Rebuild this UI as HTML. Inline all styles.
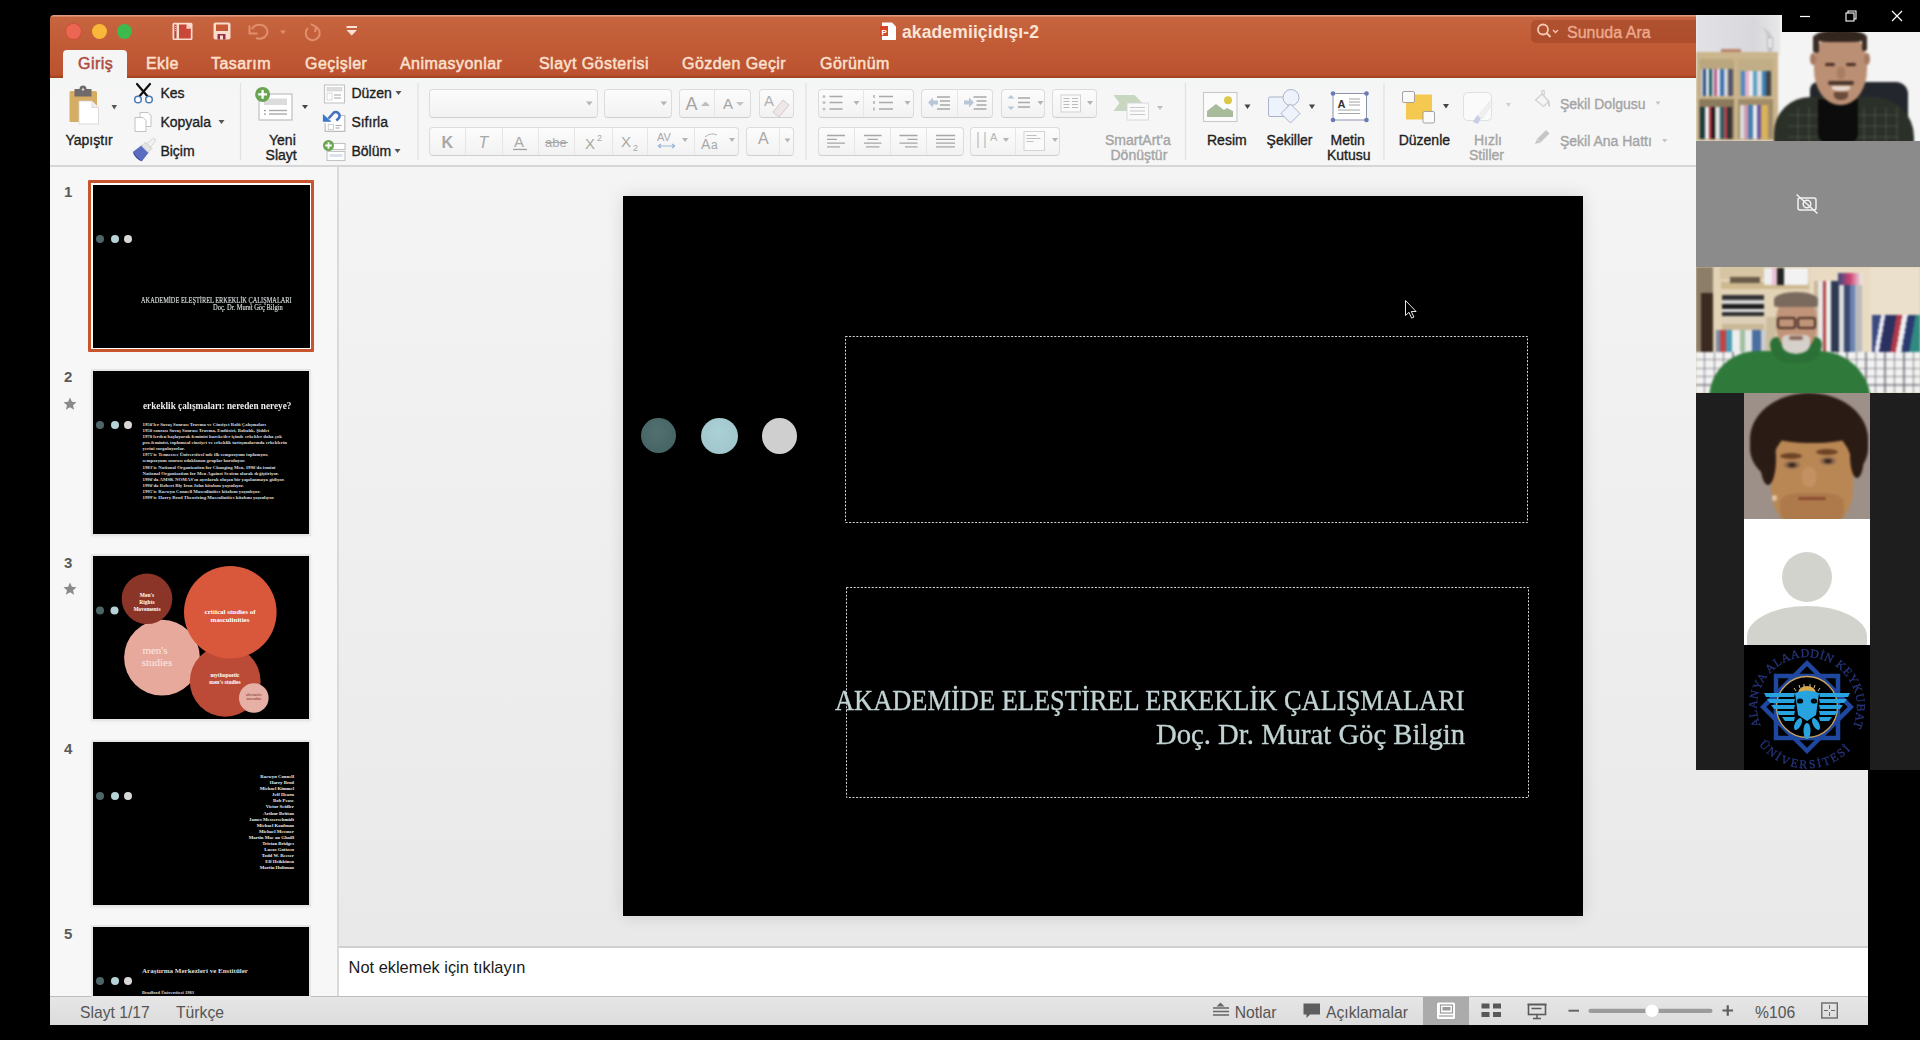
<!DOCTYPE html>
<html><head><meta charset="utf-8">
<style>
*{margin:0;padding:0;box-sizing:border-box}
html,body{width:1920px;height:1040px;overflow:hidden;background:#000;font-family:"Liberation Sans",sans-serif;position:relative}
.a{position:absolute}
.t{position:absolute;white-space:nowrap;line-height:1}
.tab{position:absolute;top:56px;font-size:16px;color:#fbe0cf;line-height:1;white-space:nowrap;letter-spacing:0.45px;-webkit-text-stroke:0.5px #fbe0cf}
.rl{position:absolute;font-size:14px;color:#1e1e1e;white-space:nowrap;line-height:1;-webkit-text-stroke:0.35px #1e1e1e}
.dis{color:#a4a4a4;-webkit-text-stroke:0.35px #a4a4a4}
.btn{position:absolute;border:1px solid #dcdcdc;border-bottom-color:#cfcfcf;border-radius:4px;background:linear-gradient(#fcfcfc,#f2f2f2)}
.st{position:absolute;font-size:15.7px;color:#555;white-space:nowrap;line-height:1}
.num{position:absolute;left:64px;font-size:15px;font-weight:bold;color:#5a5a5a;line-height:1}
.thumb{position:absolute;left:93px;width:216px;height:163px;background:#000;box-shadow:0 0 0 2px #e6e6e6,0 1px 3px 2px rgba(0,0,0,0.05)}
.dot{position:absolute;border-radius:50%}
.sl{font-family:"Liberation Serif",serif}
svg{position:absolute;overflow:visible}
</style></head><body>
<!-- window backgrounds -->
<div class="a" style="left:50px;top:15px;width:1646px;height:63px;background:linear-gradient(#e3a283 0,#dd9474 1px,#c5653f 2.5px,#c15b36 50%,#bc5230 95%,#a5461f 98%,#9a411f 100%);border-radius:4px 0 0 0"></div>
<div class="a" style="left:50px;top:78px;width:1646px;height:89px;background:linear-gradient(#f4f5f6,#f6f6f6 20%,#f6f6f6);border-bottom:2px solid #d6d6d6"></div>
<div class="a" style="left:50px;top:167px;width:289px;height:829px;background:#f7f7f7;border-right:2px solid #dadada"></div>
<div class="a" style="left:339px;top:167px;width:1529px;height:780px;background:linear-gradient(#f4f4f4,#e9e9e9)"></div>
<div class="a" style="left:339px;top:946px;width:1529px;height:50px;background:#fff;border-top:2px solid #cfcfcf"></div>
<div class="a" style="left:50px;top:996px;width:1818px;height:29px;background:linear-gradient(#e6e6e6,#dcdcdc);border-top:1px solid #bdbdbd"></div>
<!-- titlebar -->
<div class="a" style="left:66px;top:24px;width:15px;height:15px;border-radius:50%;background:#ec6753;box-shadow:0 0 0 1px #cf4f3b"></div>
<div class="a" style="left:92px;top:24px;width:15px;height:15px;border-radius:50%;background:#f9b83a"></div>
<div class="a" style="left:117px;top:24px;width:15px;height:15px;border-radius:50%;background:#3db94d"></div>
<div class="a" style="left:63px;top:50px;width:64px;height:30px;background:#f5f5f5;border-radius:4px 4px 0 0"></div>
<div class="tab" style="left:78px;color:#ae4a40;-webkit-text-stroke:0.5px #ae4a40">Giriş</div>
<div class="tab" style="left:146px">Ekle</div>
<div class="tab" style="left:211px">Tasarım</div>
<div class="tab" style="left:305px">Geçişler</div>
<div class="tab" style="left:400px">Animasyonlar</div>
<div class="tab" style="left:539px">Slayt Gösterisi</div>
<div class="tab" style="left:682px">Gözden Geçir</div>
<div class="tab" style="left:820px">Görünüm</div>
<div class="t" style="left:902px;top:23.5px;font-size:17.5px;font-weight:bold;color:#fbe4d6;letter-spacing:0.12px">akademiiçidışı-2</div>
<div class="a" style="left:1531px;top:20px;width:165px;height:23px;background:rgba(130,45,20,0.32);border-radius:5px 0 0 5px"></div>
<div class="t" style="left:1567px;top:25.2px;font-size:16px;color:#eca98d;-webkit-text-stroke:0.4px #eca98d">Sunuda Ara</div>
<svg style="left:0;top:0" width="1920" height="100">
  <!-- sidebar icon -->
  <rect x="172.5" y="22.8" width="20" height="17.2" rx="1.5" fill="#f9dccb"/>
  <rect x="174.3" y="24.5" width="2.2" height="14" fill="#b4483a"/>
  <circle cx="175.4" cy="26.5" r="0.6" fill="#f9dccb"/><circle cx="175.4" cy="28.5" r="0.6" fill="#f9dccb"/><circle cx="175.4" cy="30.5" r="0.6" fill="#f9dccb"/>
  <path d="M179 24.5 h7.5 l4.3 4.3 v9.7 h-11.8 z" fill="#c8463a"/>
  <path d="M186.5 24.5 v4.3 h4.3 z" fill="#f9dccb"/>
  <!-- save -->
  <rect x="213.5" y="22.5" width="17" height="17" rx="2" fill="#f9dccb"/>
  <rect x="216" y="24.5" width="12" height="6.5" fill="#c75a36"/>
  <rect x="217.5" y="34" width="8" height="5.5" fill="#9c2f49"/>
  <rect x="220" y="35.5" width="3" height="4" fill="#f9dccb"/>
  <!-- undo -->
  <path d="M252 29 a8 7 0 1 1 4 9" fill="none" stroke="#e0906d" stroke-width="2"/>
  <path d="M249.5 25.5 v8 h8" fill="none" stroke="#e0906d" stroke-width="2"/>
  <path d="M280 30.5 h6 l-3 3.5 z" fill="#e0906d"/>
  <!-- redo -->
  <path d="M316 27 a7 7 0 1 1 -8 1" fill="none" stroke="#e0906d" stroke-width="2"/>
  <path d="M311 24 l5 3 l-1 5" fill="none" stroke="#e0906d" stroke-width="2"/>
  <!-- customize -->
  <rect x="346.5" y="26" width="10.5" height="2" fill="#fbe2d4"/>
  <path d="M346.5 30 h10.5 l-5.25 5.5 z" fill="#fbe2d4"/>
  <!-- ppt doc icon in title -->
  <path d="M882 22.5 h10 l4 4 v13.5 h-14 z" fill="#fff"/>
  <rect x="880" y="26" width="8" height="10" fill="#d24726"/>
  <text x="881.5" y="34.5" font-size="8" font-weight="bold" fill="#fff" font-family="Liberation Sans">P</text>
  <!-- search -->
  <circle cx="1543" cy="29.5" r="5" fill="none" stroke="#f6c8b3" stroke-width="1.8"/>
  <line x1="1546.5" y1="33" x2="1550.5" y2="37" stroke="#f6c8b3" stroke-width="2"/>
  <path d="M1553 30 l2.5 2.5 l2.5 -2.5" fill="none" stroke="#f6c8b3" stroke-width="1.3"/>
</svg>
<!-- ribbon labels -->
<div class="rl" style="left:65.5px;top:132.8px">Yapıştır</div>
<div class="rl" style="left:160.4px;top:86.2px">Kes</div>
<div class="rl" style="left:160.4px;top:115.3px">Kopyala</div>
<div class="rl" style="left:160.4px;top:144.4px">Biçim</div>
<div class="rl" style="left:269px;top:132.8px">Yeni</div>
<div class="rl" style="left:265.6px;top:147.8px">Slayt</div>
<div class="rl" style="left:351.4px;top:86.2px">Düzen</div>
<div class="rl" style="left:351.4px;top:115.3px">Sıfırla</div>
<div class="rl" style="left:351.4px;top:144.4px">Bölüm</div>
<div class="rl dis" style="left:1105px;top:132.8px">SmartArt'a</div>
<div class="rl dis" style="left:1110.5px;top:147.8px">Dönüştür</div>
<div class="rl" style="left:1207px;top:132.8px">Resim</div>
<div class="rl" style="left:1266.6px;top:132.8px">Şekiller</div>
<div class="rl" style="left:1330.6px;top:132.8px">Metin</div>
<div class="rl" style="left:1327px;top:147.8px">Kutusu</div>
<div class="rl" style="left:1398.7px;top:132.8px">Düzenle</div>
<div class="rl dis" style="left:1473.9px;top:132.8px">Hızlı</div>
<div class="rl dis" style="left:1469px;top:147.8px">Stiller</div>
<div class="rl dis" style="left:1560px;top:96.5px">Şekil Dolgusu</div>
<div class="rl dis" style="left:1560px;top:134.4px">Şekil Ana Hattı</div>
<!-- buttons -->
<div class="btn" style="left:429px;top:89px;width:169px;height:29px"></div>
<div class="btn" style="left:604px;top:89px;width:68px;height:29px"></div>
<div class="btn" style="left:679px;top:89px;width:72px;height:29px"></div>
<div class="btn" style="left:759px;top:89px;width:35px;height:29px"></div>
<div class="btn" style="left:429px;top:126.5px;width:310px;height:29px"></div>
<div class="btn" style="left:746px;top:126.5px;width:48px;height:29px"></div>
<div class="btn" style="left:818px;top:88.5px;width:96px;height:29px"></div>
<div class="btn" style="left:921px;top:88.5px;width:72px;height:29px"></div>
<div class="btn" style="left:1001px;top:88.5px;width:44px;height:29px"></div>
<div class="btn" style="left:1052px;top:88.5px;width:45px;height:29px"></div>
<div class="btn" style="left:818px;top:126.5px;width:146px;height:29px"></div>
<div class="btn" style="left:970px;top:126.5px;width:90px;height:29px"></div>
<svg style="left:0;top:0" width="1920" height="170">
  <g stroke="#e6e6e6" stroke-width="1">
    <line x1="714.5" y1="90" x2="714.5" y2="117"/>
    <line x1="465.5" y1="127" x2="465.5" y2="155"/>
    <line x1="502.5" y1="127" x2="502.5" y2="155"/>
    <line x1="538.5" y1="127" x2="538.5" y2="155"/>
    <line x1="574.5" y1="127" x2="574.5" y2="155"/>
    <line x1="612.5" y1="127" x2="612.5" y2="155"/>
    <line x1="647.5" y1="127" x2="647.5" y2="155"/>
    <line x1="694.5" y1="127" x2="694.5" y2="155"/>
    <line x1="779.5" y1="127" x2="779.5" y2="155"/>
    <line x1="863.5" y1="89" x2="863.5" y2="117"/>
    <line x1="957.5" y1="89" x2="957.5" y2="117"/>
    <line x1="854.5" y1="127" x2="854.5" y2="155"/>
    <line x1="890.5" y1="127" x2="890.5" y2="155"/>
    <line x1="926.5" y1="127" x2="926.5" y2="155"/>
    <line x1="1015.5" y1="127" x2="1015.5" y2="155"/>
  </g>
  <!-- group separators -->
  <g stroke="#e2e2e2" stroke-width="1.2">
    <line x1="240.5" y1="83" x2="240.5" y2="160"/>
    <line x1="418" y1="83" x2="418" y2="160"/>
    <line x1="806" y1="83" x2="806" y2="160"/>
    <line x1="1185.5" y1="83" x2="1185.5" y2="160"/>
    <line x1="1384" y1="83" x2="1384" y2="160"/>
  </g>
  <!-- paste -->
  <rect x="69.5" y="91" width="27.5" height="31" rx="1.5" fill="#d5ad63"/>
  <path d="M74.5 89 h5 a3.5 3.5 0 0 1 7 0 h5 v7.5 h-17 z" fill="#716a6a"/>
  <circle cx="83" cy="89.5" r="1.2" fill="#d8d8d8"/>
  <path d="M79 101 h13 l6.5 6.5 v16.5 h-19.5 z" fill="#fff" stroke="#d9d0d0" stroke-width="0.8"/>
  <path d="M92 101 v6.5 h6.5" fill="#eee" stroke="#d9d0d0" stroke-width="0.8"/>
  <path d="M111.5 105 h5.5 l-2.75 4.5 z" fill="#555"/>
  <!-- scissors -->
  <path d="M137 84 L149 98 M150 84 L138 98" stroke="#111" stroke-width="2.2" stroke-linecap="round"/>
  <circle cx="138" cy="99.5" r="3.3" fill="#fff" stroke="#4a78b8" stroke-width="1.5"/>
  <circle cx="149" cy="99.5" r="3.3" fill="#fff" stroke="#4a78b8" stroke-width="1.5"/>
  <!-- copy -->
  <path d="M140 112.5 h8 l3 3 v11 h-11 z" fill="#fff" stroke="#bbb" stroke-width="0.9"/>
  <path d="M135 117.5 h8 l3 3 v11 h-11 z" fill="#fff" stroke="#bbb" stroke-width="0.9"/>
  <path d="M218.5 120 h6 l-3 4 z" fill="#555"/>
  <!-- brush -->
  <g transform="rotate(45 143 151)">
    <path d="M138 148 h10 l1.5 11 q-6.5 3 -13 0 z" fill="#5a6cc2"/>
    <path d="M138 159 q5 2 11 0" stroke="#3d4e9a" stroke-width="1" fill="none"/>
    <rect x="138.5" y="143" width="9" height="5.5" fill="#e4e4e4" stroke="#b9b9b9" stroke-width="0.6"/>
    <path d="M140.5 143 l0.8 -8 q1.7 -2 3.4 0 l0.8 8 z" fill="#f2f2f2" stroke="#c4c4c4" stroke-width="0.6"/>
  </g>
  <!-- new slide -->
  <rect x="259" y="94" width="33" height="26" fill="#fff" stroke="#c4c4c4" stroke-width="1.3"/>
  <rect x="264" y="98.5" width="23" height="6.5" fill="#dcdcdc"/>
  <rect x="264" y="110" width="2" height="1.2" fill="#999"/><rect x="269" y="109.8" width="18" height="1.4" fill="#aaa"/>
  <rect x="264" y="113.5" width="2" height="1.2" fill="#999"/><rect x="269" y="113.3" width="18" height="1.4" fill="#aaa"/>
  <circle cx="262.6" cy="94.4" r="7.5" fill="#6aa553"/>
  <path d="M262.6 90 v8.8 M258.2 94.4 h8.8" stroke="#fff" stroke-width="2.3"/>
  <path d="M302 105 h6 l-3 4 z" fill="#444"/>
  <!-- duzen -->
  <rect x="324.5" y="85" width="20" height="18" fill="#fff" stroke="#c4c4c4" stroke-width="1.1"/>
  <rect x="327" y="87.5" width="15" height="3.5" fill="#ddd" stroke="#c8c8c8" stroke-width="0.5"/>
  <rect x="327" y="93" width="5" height="7" fill="none" stroke="#c8c8c8" stroke-width="0.7"/>
  <path d="M334 95 h7 M334 98 h7" stroke="#999" stroke-width="0.9"/>
  <path d="M395.5 91 h6 l-3 4 z" fill="#555"/>
  <!-- sifirla -->
  <path d="M340 115.5 h4.8 v15.9 h-19.6 v-8" fill="#fff" stroke="#bdbdbd" stroke-width="1.2"/>
  <rect x="328.2" y="124.5" width="5.3" height="5.2" fill="none" stroke="#c4c4c4" stroke-width="0.8"/>
  <path d="M335.6 125.6 h6 M335.6 128 h4" stroke="#9a9a9a" stroke-width="0.9"/>
  <path d="M328.5 118.5 L333 113.5 a3.6 3.6 0 0 1 5.8 4.6 L336.3 120.5" fill="none" stroke="#4470c0" stroke-width="2.6" stroke-linejoin="round"/>
  <path d="M322.9 114.1 v7.6 h8.7 z" fill="#3b78cc"/>
  <!-- bolum -->
  <rect x="327" y="143.5" width="18" height="6" fill="#fff" stroke="#c4c4c4" stroke-width="1.1"/>
  <rect x="327" y="151.5" width="18" height="9" fill="#fff" stroke="#c4c4c4" stroke-width="1.1"/>
  <rect x="329.5" y="154" width="13" height="3" fill="#dde3ea"/>
  <circle cx="328.5" cy="145.5" r="5.5" fill="#6aa553"/>
  <path d="M328.5 142.3 v6.4 M325.3 145.5 h6.4" stroke="#fff" stroke-width="1.8"/>
  <path d="M394.5 149 h6 l-3 4 z" fill="#555"/>
  <!-- font dropdowns -->
  <path d="M586 101.5 h6.5 l-3.25 4 z" fill="#b4b4b4"/>
  <path d="M660.5 101.5 h6.5 l-3.25 4 z" fill="#b4b4b4"/>
  <!-- grow/shrink font -->
  <text x="685.5" y="109.5" font-size="18" fill="#a5a5a5" font-family="Liberation Sans">A</text>
  <path d="M701 106 h9 l-4.5 -4.5 z" fill="#bdbdbd"/>
  <text x="723" y="109" font-size="15" fill="#a5a5a5" font-family="Liberation Sans">A</text>
  <path d="M736 102 h8 l-4 4 z" fill="#c4c4c4"/>
  <!-- clear format -->
  <text x="764" y="106" font-size="15" fill="#b0b0b0" font-family="Liberation Sans">A</text>
  <path d="M773 112 l10 -12 l6 5 l-10 12 z" fill="#efe6e8" stroke="#c9c0c2" stroke-width="0.8"/>
  <!-- row2 font -->
  <text x="441.5" y="147.5" font-size="16" font-weight="bold" fill="#a8a8a8" font-family="Liberation Sans">K</text>
  <text x="478.5" y="147.5" font-size="16" font-style="italic" fill="#a8a8a8" font-family="Liberation Sans">T</text>
  <text x="514" y="146.5" font-size="15" fill="#a8a8a8" font-family="Liberation Sans">A</text>
  <rect x="513" y="148.8" width="14" height="1.3" fill="#a0a0a0"/>
  <text x="545" y="146.5" font-size="13" fill="#a8a8a8" font-family="Liberation Sans">abe</text>
  <rect x="545" y="142" width="23" height="1" fill="#a8a8a8"/>
  <text x="585" y="148.5" font-size="15" fill="#a8a8a8" font-family="Liberation Sans">X</text>
  <text x="597" y="140.5" font-size="9" fill="#a8a8a8" font-family="Liberation Sans">2</text>
  <text x="621" y="146.5" font-size="15" fill="#a8a8a8" font-family="Liberation Sans">X</text>
  <text x="633" y="150.5" font-size="9" fill="#a8a8a8" font-family="Liberation Sans">2</text>
  <text x="657" y="141" font-size="11" fill="#a8a8a8" font-family="Liberation Sans">AV</text>
  <path d="M658 146 h17 M658 146 l3 -2 M658 146 l3 2 M675 146 l-3 -2 M675 146 l-3 2" stroke="#9ab6d6" stroke-width="1.2"/>
  <path d="M682 138 h6 l-3 4 z" fill="#b4b4b4"/>
  <text x="701" y="149" font-size="14" fill="#a8a8a8" font-family="Liberation Sans">A</text>
  <text x="711" y="149" font-size="12" fill="#a8a8a8" font-family="Liberation Sans">a</text>
  <path d="M705 137 q6 -5 12 -2" fill="none" stroke="#b5b5b5" stroke-width="1"/>
  <path d="M729 138 h6 l-3 4 z" fill="#b4b4b4"/>
  <text x="758" y="144" font-size="16" fill="#a8a8a8" font-family="Liberation Sans">A</text>
  <path d="M784.5 138.5 h6 l-3 4 z" fill="#b4b4b4"/>
  <!-- bullets -->
  <g fill="#c2c2c2"><circle cx="824" cy="96.5" r="1.5"/><circle cx="824" cy="102.5" r="1.5"/><circle cx="824" cy="109" r="1.5"/></g>
  <g stroke="#a8a8a8" stroke-width="1.3"><path d="M829.5 96.5 h13 M829.5 102.5 h13 M829.5 109 h13"/></g>
  <path d="M853.5 101 h6 l-3 4 z" fill="#b4b4b4"/>
  <g fill="#c2c2c2"><rect x="873" y="95" width="2" height="3"/><rect x="873" y="101" width="2" height="3"/><rect x="873" y="107.5" width="2" height="3"/></g>
  <g stroke="#a8a8a8" stroke-width="1.3"><path d="M879 96.5 h14 M879 102.5 h14 M879 109 h14"/></g>
  <path d="M904.5 101 h6 l-3 4 z" fill="#b4b4b4"/>
  <!-- indent -->
  <path d="M928 102.5 l5 -5 v3 h5 v4 h-5 v3 z" fill="#b8c6d8"/>
  <g stroke="#a8a8a8" stroke-width="1.3"><path d="M937 97 h13 M940 101 h10 M940 105 h10 M937 109 h13"/></g>
  <path d="M974 102.5 l-5 -5 v3 h-5 v4 h5 v3 z" fill="#b8c6d8"/>
  <g stroke="#a8a8a8" stroke-width="1.3"><path d="M973.5 97 h13 M976.5 101 h10 M976.5 105 h10 M973.5 109 h13"/></g>
  <!-- line spacing -->
  <path d="M1011 95 l3.5 3.5 h-7 z M1011 110 l3.5 -3.5 h-7 z" fill="#b8c6d8"/>
  <g stroke="#a8a8a8" stroke-width="1.3"><path d="M1018 98 h12 M1018 102.5 h12 M1018 107 h12"/></g>
  <path d="M1037.5 101 h6 l-3 4 z" fill="#b4b4b4"/>
  <!-- columns -->
  <rect x="1061" y="95" width="19.5" height="17" fill="#fafafa" stroke="#cfcfcf" stroke-width="0.9"/>
  <g stroke="#bcbcbc" stroke-width="1"><path d="M1063.5 98.5 h6 M1063.5 101.5 h6 M1063.5 104.5 h6 M1063.5 107.5 h6 M1072 98.5 h6 M1072 101.5 h6 M1072 104.5 h6 M1072 107.5 h6"/></g>
  <path d="M1087 101 h6 l-3 4 z" fill="#b4b4b4"/>
  <!-- align -->
  <g stroke="#a6a6a6" stroke-width="1.3">
    <path d="M827 135.5 h18 M827 139.3 h10 M827 143.1 h18 M827 146.8 h13"/>
    <path d="M864 135.5 h17.5 M867.5 139.3 h10.5 M864 143.1 h17.5 M866 146.8 h13.5"/>
    <path d="M899.5 135.5 h18 M907.5 139.3 h10 M899.5 143.1 h18 M905 146.8 h12.5"/>
    <path d="M936 135.5 h19 M936 139.3 h19 M936 143.1 h19 M936 146.8 h19"/>
  </g>
  <!-- text direction -->
  <g stroke="#b4b4b4" stroke-width="1.1"><path d="M978 132 v16 M985 132 v16"/></g>
  <text x="990" y="141" font-size="11" fill="#b4b4b4" font-family="Liberation Sans">A</text>
  <path d="M1003 138 h6 l-3 4 z" fill="#b4b4b4"/>
  <rect x="1024" y="131.5" width="20.5" height="19" fill="#fafafa" stroke="#d0d0d0" stroke-width="0.9"/>
  <g stroke="#c0c0c0" stroke-width="1"><path d="M1026.5 135.5 h10 M1026.5 138.5 h14 M1026.5 141.5 h7"/></g>
  <path d="M1052 138 h6 l-3 4 z" fill="#b4b4b4"/>
  <!-- smartart -->
  <path d="M1113.5 95 h21 l8 8 l-8 8 h-21 l6 -8 z" fill="#c7d7c0"/>
  <rect x="1127" y="103" width="21.5" height="17" fill="#fafafa" stroke="#d6d6d6" stroke-width="0.9"/>
  <g stroke="#c9c9c9" stroke-width="1"><path d="M1130 107.5 h15 M1130 111 h15 M1130 114.5 h15"/></g>
  <path d="M1157 106 h6 l-3 4 z" fill="#c0c0c0"/>
  <!-- resim -->
  <rect x="1203.5" y="92.5" width="33.5" height="29" fill="#fbfbfb" stroke="#c9c9c9" stroke-width="1.1"/>
  <path d="M1207 117 v-6 l9 -7 l8 6 l3 -2 l6 3 v6 z" fill="#a8bc9c"/>
  <circle cx="1228" cy="100.3" r="4" fill="#d9c84a"/>
  <path d="M1244.5 104.5 h6 l-3 4.5 z" fill="#444"/>
  <!-- sekiller -->
  <rect x="1268.5" y="97" width="19.5" height="19.5" rx="1.5" fill="#edf2fb" stroke="#aab4c8" stroke-width="1"/>
  <circle cx="1291" cy="97.5" r="8" fill="#edf2fb" stroke="#aab4c8" stroke-width="1"/>
  <path d="M1290.5 104 l9.5 9.5 l-9.5 9.5 l-9.5 -9.5 z" fill="#edf2fb" stroke="#aab4c8" stroke-width="1"/>
  <path d="M1309 104.5 h6 l-3 4.5 z" fill="#444"/>
  <!-- metin kutusu -->
  <rect x="1333" y="93.5" width="33.5" height="26.5" fill="#fff" stroke="#8b93a8" stroke-width="1"/>
  <text x="1337.5" y="107.5" font-size="11" font-weight="bold" fill="#333" font-family="Liberation Sans">A</text>
  <g stroke="#9a9a9a" stroke-width="0.9"><path d="M1349 99 h11 M1349 102 h11 M1349 105 h11 M1338 110 h22 M1338 113.5 h22"/></g>
  <g fill="#6879b7"><circle cx="1333" cy="93.5" r="2.3"/><circle cx="1366.5" cy="93.5" r="2.3"/><circle cx="1333" cy="120" r="2.3"/><circle cx="1366.5" cy="120" r="2.3"/></g>
  <!-- duzenle -->
  <rect x="1406" y="94.5" width="26" height="25" fill="#f5c84f"/>
  <rect x="1402.5" y="91.5" width="12" height="11" rx="1.5" fill="#fafafa" stroke="#9a9a9a" stroke-width="0.9"/>
  <rect x="1423" y="111.5" width="11.5" height="11.5" rx="1.5" fill="#fafafa" stroke="#9a9a9a" stroke-width="0.9"/>
  <path d="M1443 104 h6 l-3 4.5 z" fill="#444"/>
  <!-- hizli stiller -->
  <rect x="1463.5" y="92.5" width="28" height="28" rx="4" fill="#fafafa" stroke="#e0e0e0" stroke-width="1"/>
  <path d="M1473 122 l4 -7 l4 3 l-3 6 z" fill="#c8cfe4"/>
  <path d="M1478 116 l12 -15 l3 2 l-11 16 z" fill="#efefef" stroke="#e2e2e2" stroke-width="0.6"/>
  <path d="M1506 103 h5 l-2.5 4 z" fill="#cfcfcf"/>
  <!-- sekil dolgusu -->
  <path d="M1535.5 100 l6.5 -6 l7 7.5 l-5.5 5 z" fill="#f4f4f4" stroke="#cfcfcf" stroke-width="1.1"/>
  <path d="M1542 94 v-3.5 h2.2 v5" fill="none" stroke="#cdcdcd" stroke-width="1.1"/>
  <path d="M1548 100 l1.5 6.5" stroke="#c9c9c9" stroke-width="1.4"/>
  <path d="M1655.5 101.5 h5 l-2.5 3.5 z" fill="#c4c4c4"/>
  <!-- sekil ana hatti -->
  <path d="M1535 144 l2 -5 l9 -9 l3.5 3.5 l-9 9 z" fill="#c6c6c6"/><path d="M1537 139 l3.5 3.5" stroke="#dedede" stroke-width="0.8"/>
  <path d="M1662 139 h5.5 l-2.75 3.5 z" fill="#c4c4c4"/>
</svg>
<!-- left panel -->
<div class="num" style="top:183.5px">1</div>
<div class="a" style="left:88px;top:180px;width:226px;height:172px;border:3.5px solid #c9552e;background:#fff;border-radius:1px"></div>
<div class="a" style="left:92.5px;top:184.5px;width:217px;height:163px;background:#000"></div>
<div class="dot" style="left:96px;top:235px;width:8px;height:8px;background:#4e6568"></div>
<div class="dot" style="left:110.5px;top:235px;width:8px;height:8px;background:#b6d2d6"></div>
<div class="dot" style="left:124px;top:235px;width:8px;height:8px;background:#d8d8d8"></div>
<div class="t sl" style="left:141px;top:297.5px;font-size:7.2px;color:#d6dede;transform:scaleX(0.88);transform-origin:0 0;-webkit-text-stroke:0.15px #d6dede">AKADEMİDE ELEŞTİREL ERKEKLİK ÇALIŞMALARI</div>
<div class="t sl" style="left:212.7px;top:304.8px;font-size:7.2px;color:#d6dede;transform:scaleX(0.9);transform-origin:0 0;-webkit-text-stroke:0.15px #d6dede">Doç. Dr. Murat Göç Bilgin</div>

<div class="num" style="top:368.5px">2</div>
<svg style="left:63px;top:397px" width="14" height="14"><path d="M7 0.5 l1.9 4.3 4.6 .4 -3.5 3 1.1 4.5 -4.1 -2.4 -4.1 2.4 1.1 -4.5 -3.5 -3 4.6 -.4 z" fill="#8a8a8a"/></svg>
<div class="thumb" style="top:371px"></div>
<div class="dot" style="left:96px;top:421px;width:8px;height:8px;background:#4e6568"></div>
<div class="dot" style="left:110.5px;top:421px;width:8px;height:8px;background:#b6d2d6"></div>
<div class="dot" style="left:124px;top:421px;width:8px;height:8px;background:#d8d8d8"></div>
<div class="t sl" style="left:142.5px;top:402px;font-size:9.5px;font-weight:bold;color:#eee;transform:scaleX(0.97);transform-origin:0 0">erkeklik çalışmaları: nereden nereye?</div>
<div class="a sl" style="left:142.5px;top:421.5px;width:160px;font-size:4.8px;line-height:6.15px;color:#ddd;font-weight:bold;white-space:nowrap">1950'ler Savaş Sonrası Travma ve Cinsiyet Rolü Çalışmaları<br>1950 sonrası Savaş Sonrası Travma, Endüstri, Babalık, Şiddet<br>1970 lerden başlayarak feminist hareketler içinde erkekler daha çok<br>pro-feminist, toplumsal cinsiyet ve erkeklik tartışmalarında erkeklerin<br>yerini sorguluyorlar.<br>1975'te Tennessee Üniversitesi'nde ilk sempozyum toplanıyor,<br>sempozyum sonrası odaklanan gruplar kuruluyor.<br>1983'te National Organization for Changing Men, 1990'da ismini<br>National Organization for Men Against Sexism olarak değiştiriyor.<br>1990'da AMSK NOMAS'ın ayrılarak oluşan bir yapılanmaya gidiyor.<br>1990'da Robert Bly Iron John kitabını yayınlıyor.<br>1995'te Raewyn Connell Masculinities kitabını yayınlıyor.<br>1999'te Harry Brod Theorizing Masculinities kitabını yayınlıyor.</div>

<div class="num" style="top:554.5px">3</div>
<svg style="left:63px;top:582px" width="14" height="14"><path d="M7 0.5 l1.9 4.3 4.6 .4 -3.5 3 1.1 4.5 -4.1 -2.4 -4.1 2.4 1.1 -4.5 -3.5 -3 4.6 -.4 z" fill="#8a8a8a"/></svg>
<div class="thumb" style="top:556px"></div>
<svg style="left:93px;top:556px" width="216" height="163">
  <circle cx="7" cy="54.5" r="4" fill="#4e6568"/>
  <circle cx="21.5" cy="54.5" r="4" fill="#b6d2d6"/>
  <circle cx="69" cy="101.7" r="37.9" fill="#e8a99d"/>
  <circle cx="54" cy="42.8" r="25.3" fill="#8a3528"/>
  <circle cx="132.2" cy="125.3" r="35.4" fill="#bb4b36"/>
  <circle cx="137.3" cy="56.3" r="46.3" fill="#d9573a"/>
  <circle cx="160.8" cy="142" r="14.8" fill="#e6b0a6"/>
  <g font-family="Liberation Serif" fill="#fff" text-anchor="middle" font-weight="bold">
    <text x="54" y="41" font-size="5.5">Men's</text><text x="54" y="48" font-size="5.5">Rights</text><text x="54" y="55" font-size="5.5">Movements</text>
    <text x="137" y="58" font-size="7">critical studies of</text><text x="137" y="66" font-size="7">masculinities</text>
    <text x="132" y="121" font-size="5.5">mythopoetic</text><text x="132" y="128" font-size="5.5">men's studies</text>
    <text x="62" y="98" font-size="11" font-weight="normal" fill="#fce9e4">men's</text><text x="64" y="110" font-size="11" font-weight="normal" fill="#fce9e4">studies</text>
    <text x="161" y="140" font-size="3.5" fill="#a0554a">alternative</text><text x="161" y="144" font-size="3.5" fill="#a0554a">masculine</text>
  </g>
</svg>

<div class="num" style="top:740.5px">4</div>
<div class="thumb" style="top:742px"></div>
<div class="dot" style="left:96px;top:792px;width:8px;height:8px;background:#4e6568"></div>
<div class="dot" style="left:110.5px;top:792px;width:8px;height:8px;background:#b6d2d6"></div>
<div class="dot" style="left:124px;top:792px;width:8px;height:8px;background:#d8d8d8"></div>
<div class="a sl" style="left:200px;top:774px;width:94px;text-align:right;font-size:4.8px;line-height:6.1px;color:#eee;font-weight:bold">Raewyn Connell<br>Harry Brod<br>Michael Kimmel<br>Jeff Hearn<br>Bob Pease<br>Victor Seidler<br>Arthur Brittan<br>James Messerschmidt<br>Michael Kaufman<br>Michael Messner<br>Martin Mac an Ghaill<br>Tristan Bridges<br>Lucas Gottzen<br>Todd W. Reeser<br>Elf Heikkinen<br>Martin Hultman</div>

<div class="num" style="top:925.5px">5</div>
<div class="a" style="left:93px;top:927px;width:216px;height:69px;background:#000;box-shadow:0 0 0 2px #e6e6e6;overflow:hidden">
  <div class="dot" style="left:3px;top:50px;width:8px;height:8px;background:#4e6568"></div>
  <div class="dot" style="left:17.5px;top:50px;width:8px;height:8px;background:#b6d2d6"></div>
  <div class="dot" style="left:31px;top:50px;width:8px;height:8px;background:#d8d8d8"></div>
  <div class="t sl" style="left:49px;top:40.5px;font-size:7px;font-weight:bold;color:#ddd">Araştırma Merkezleri ve Enstitüler</div>
  <div class="t sl" style="left:49px;top:64px;font-size:4.5px;font-weight:bold;color:#ddd">Bradford Üniversitesi 1983</div>
</div>
<!-- slide -->
<div class="a" style="left:623px;top:196px;width:960px;height:720px;background:#000;box-shadow:0 0 16px rgba(0,0,0,0.13)"></div>
<div class="dot" style="left:641px;top:418px;width:35px;height:35px;background:radial-gradient(circle at 45% 40%,#52706f,#42605f)"></div>
<div class="dot" style="left:700.5px;top:418px;width:37px;height:36px;background:radial-gradient(circle at 45% 40%,#abd0d6,#9dc3ca)"></div>
<div class="dot" style="left:761.5px;top:418px;width:35.5px;height:36px;background:#cfcfcf"></div>
<svg style="left:0;top:0" width="1920" height="1040"><g fill="none" stroke="#d8d8d8" stroke-width="1" stroke-dasharray="2 1.6">
<rect x="845.5" y="336.5" width="682" height="186"/>
<rect x="846.5" y="587.5" width="682" height="210"/>
</g></svg>

<div class="t sl" style="left:835px;top:685.3px;font-size:30px;color:#c2d3d4;-webkit-text-stroke:0.35px #c2d3d4;transform:scaleX(0.881);transform-origin:0 0">AKADEMİDE ELEŞTİREL ERKEKLİK ÇALIŞMALARI</div>
<div class="t sl" style="left:1156px;top:719.3px;font-size:30px;color:#c2d3d4;-webkit-text-stroke:0.35px #c2d3d4;transform:scaleX(0.956);transform-origin:0 0">Doç. Dr. Murat Göç Bilgin</div>
<svg style="left:1405px;top:300px" width="14" height="20"><path d="M0.5 0.5 v15 l3.5 -3.2 l2.6 5.8 l2.3 -1 l-2.6 -5.6 h4.8 z" fill="#000" stroke="#e8e8e8" stroke-width="1"/></svg>
<!-- notes -->
<div class="t" style="left:348.6px;top:958.7px;font-size:16.4px;color:#1a1a1a">Not eklemek için tıklayın</div>
<!-- status -->
<div class="st" style="left:80px;top:1005px">Slayt 1/17</div>
<div class="st" style="left:176px;top:1005px">Türkçe</div>
<div class="st" style="left:1234.7px;top:1005px">Notlar</div>
<div class="st" style="left:1326px;top:1005px">Açıklamalar</div>
<div class="st" style="left:1755px;top:1005px">%106</div>
<div class="a" style="left:1423px;top:997px;width:46px;height:28px;background:#ababab"></div>
<svg style="left:0;top:0" width="1920" height="1040">
  <!-- notlar icon -->
  <path d="M1220.5 1002.5 l4 4 h-8 z" fill="#666"/>
  <g stroke="#666" stroke-width="1.5"><path d="M1213 1008 h16 M1213 1011.5 h16 M1213 1015 h16"/></g>
  <!-- comments -->
  <path d="M1303.5 1003.5 h16.5 v11 h-10 l-3.5 3.5 v-3.5 h-3 z" fill="#5e5e5e"/>
  <!-- normal view -->
  <rect x="1437" y="1002.5" width="18" height="16.5" rx="1.5" fill="#fff"/>
  <rect x="1440.5" y="1005" width="12" height="8" fill="none" stroke="#9a9a9a" stroke-width="1.2"/>
  <rect x="1442.5" y="1007" width="8" height="3.5" fill="#9a9a9a"/>
  <path d="M1439 1016 h14" stroke="#9a9a9a" stroke-width="1.2"/>
  <!-- sorter -->
  <g fill="#585858"><rect x="1481.5" y="1003.5" width="8" height="5"/><rect x="1493" y="1003.5" width="8" height="5"/><rect x="1481.5" y="1012" width="8" height="5"/><rect x="1493" y="1012" width="8" height="5"/></g>
  <!-- reading -->
  <rect x="1528.5" y="1004.5" width="17" height="10" fill="none" stroke="#5a5a5a" stroke-width="1.6"/>
  <path d="M1527.5 1004.5 h19 M1531.5 1008.5 h10 M1537 1014.5 v3.5 M1533 1018.5 h8" stroke="#5a5a5a" stroke-width="1.5"/>
  <!-- zoom -->
  <path d="M1568.5 1010.7 h10.5" stroke="#666" stroke-width="2"/>
  <rect x="1588.5" y="1008.8" width="124" height="4.2" rx="2.1" fill="#9b9b9b"/>
  <circle cx="1652" cy="1010.8" r="6.7" fill="#fff" stroke="#d0d0d0" stroke-width="0.5"/>
  <path d="M1722.5 1010.5 h10.5 M1727.75 1005.2 v10.6" stroke="#5e5e5e" stroke-width="2.2"/>
  <rect x="1821.8" y="1003" width="15.5" height="15" fill="none" stroke="#6a6a6a" stroke-width="1.4"/>
  <path d="M1829.5 1005 v4 M1829.5 1012 v4 M1824 1010.5 h4 M1831 1010.5 h4" stroke="#6a6a6a" stroke-width="1"/>
</svg>
<!-- zoom panel -->
<div class="a" style="left:1696px;top:15px;width:224px;height:755px;background:#1e1e1e;overflow:hidden">
  <!-- tile 1 -->
  <div class="a" style="left:0;top:0;width:224px;height:126px;background:#f4f4f4;overflow:hidden">
   <div class="a" style="left:0;top:0;width:224px;height:126px;filter:blur(0.8px)">
    <div class="a" style="left:0;top:0;width:84px;height:40px;background:linear-gradient(90deg,#e2e2e6,#d8d8dc 70%,#e8e8ea)"></div>
    <div class="a" style="left:40px;top:12px;width:36px;height:26px;border-right:4px solid #c4c4c8;border-radius:0 14px 0 0"></div>
    <div class="a" style="left:71px;top:22px;width:6px;height:12px;background:#e8e8e8;border:1px solid #b0b0b0"></div>
    <div class="a" style="left:25px;top:34px;width:20px;height:4px;background:#b8846a"></div>
    <div class="a" style="left:0;top:37px;width:82px;height:89px;background:#cbb58d"></div>
    <div class="a" style="left:3px;top:44px;width:35px;height:37px;background:#bba77f"></div>
    <div class="a" style="left:42px;top:44px;width:35px;height:37px;background:#c1ad86"></div>
    <div class="a" style="left:3px;top:84px;width:35px;height:40px;background:#8c7a5c"></div>
    <div class="a" style="left:42px;top:84px;width:35px;height:40px;background:#a08c6a"></div>
    <div class="a" style="left:5px;top:54px;width:32px;height:27px;background:linear-gradient(90deg,#d0d0d4 0 6%,#2d4d86 6% 16%,#e8e8ea 16% 24%,#1c5a63 24% 34%,#ddd 34% 40%,#b65b8a 40% 50%,#eee 50% 58%,#3b6fb0 58% 72%,#d8d8d8 72% 84%,#556 84%)"></div>
    <div class="a" style="left:45px;top:56px;width:30px;height:25px;background:linear-gradient(90deg,#4d88c4 0 14%,#e7b2c8 14% 28%,#eee 28% 40%,#5da0c8 40% 55%,#ddd 55% 70%,#3a7fb5 70% 85%,#444 85%)"></div>
    <div class="a" style="left:4px;top:92px;width:32px;height:32px;background:linear-gradient(90deg,#1e3a3a 0 15%,#eee 15% 28%,#a03040 28% 38%,#111 38% 48%,#e0e0e0 48% 62%,#2e5f5f 62% 75%,#c04050 75% 85%,#333 85%)"></div>
    <div class="a" style="left:44px;top:90px;width:28px;height:34px;background:linear-gradient(90deg,#ddd 0 15%,#cf9bb0 15% 30%,#4a7cb0 30% 45%,#eee 45% 60%,#6a5aa0 60% 75%,#d9b25a 75%)"></div>
    <!-- chair -->
    <div class="a" style="left:114px;top:67px;width:98px;height:62px;background:#23262c;border-radius:8px 12px 0 0"></div>
    <!-- body -->
    <div class="a" style="left:78px;top:82px;width:140px;height:50px;background:#2b3029;border-radius:36px 40px 0 0"></div>
    <div class="a" style="left:92px;top:92px;width:110px;height:40px;background:repeating-linear-gradient(90deg,transparent 0 9px,rgba(90,100,80,0.35) 9px 11px),repeating-linear-gradient(0deg,transparent 0 9px,rgba(90,100,80,0.3) 9px 11px)"></div>
    <div class="a" style="left:122px;top:84px;width:40px;height:45px;background:#0c0c0c;border-radius:0 0 10px 10px"></div>
    <!-- head -->
    <div class="a" style="left:134px;top:72px;width:22px;height:14px;background:#8a6450"></div>
    <div class="a" style="left:118px;top:17px;width:53px;height:73px;background:#bb8f73;border-radius:44% 44% 48% 48%"></div>
    <div class="a" style="left:119px;top:15px;width:51px;height:12px;background:#33261f;border-radius:50% 50% 30% 30%"></div>
    <div class="a" style="left:117px;top:20px;width:6px;height:18px;background:#3a2c25;border-radius:4px"></div>
    <div class="a" style="left:166px;top:20px;width:5px;height:16px;background:#3a2c25;border-radius:4px"></div>
    <div class="a" style="left:114px;top:38px;width:6px;height:12px;background:#a57a60;border-radius:50%"></div>
    <div class="a" style="left:168px;top:38px;width:6px;height:12px;background:#a57a60;border-radius:50%"></div>
    <div class="a" style="left:132px;top:66px;width:26px;height:4px;background:#4a342a;border-radius:2px"></div>
    <div class="a" style="left:136px;top:71px;width:18px;height:5px;background:#e8d8d0;border-radius:0 0 50% 50%"></div>
    <div class="a" style="left:138px;top:77px;width:14px;height:8px;background:#6a4a3a;border-radius:0 0 50% 50%"></div>
    <div class="a" style="left:129px;top:48px;width:10px;height:3px;background:#4a2e24;border-radius:2px"></div>
    <div class="a" style="left:150px;top:48px;width:10px;height:3px;background:#4a2e24;border-radius:2px"></div>
    <div class="a" style="left:141px;top:52px;width:8px;height:12px;background:#a97d62;border-radius:40%"></div>
   </div>
  </div>
  <!-- black strip with window controls -->
  <div class="a" style="left:86px;top:-15px;width:138px;height:31.5px;background:#000"></div>
  <!-- tile 2 gray -->
  <div class="a" style="left:0;top:126px;width:224px;height:126px;background:#8b8b8b"></div>
  <svg style="left:99px;top:177px" width="26" height="24">
    <rect x="3" y="6" width="18" height="12" rx="2" fill="none" stroke="#f2f2f2" stroke-width="1.5"/>
    <circle cx="12" cy="12" r="3.8" fill="none" stroke="#f2f2f2" stroke-width="1.5"/>
    <path d="M1.5 2.5 L22.5 21.5" stroke="#f2f2f2" stroke-width="1.5"/>
  </svg>
  <!-- tile 3 -->
  <div class="a" style="left:0;top:252px;width:224px;height:126px;background:#dccbab;overflow:hidden">
   <div class="a" style="left:0;top:0;width:224px;height:126px;filter:blur(0.8px)">
    <div class="a" style="left:0;top:0;width:18px;height:126px;background:#8d7e6a"></div>
    <div class="a" style="left:5px;top:26px;width:12px;height:64px;background:#3b2a20"></div>
    <div class="a" style="left:17px;top:0;width:97px;height:92px;background:#e3d3b6"></div>
    <div class="a" style="left:24px;top:0;width:88px;height:12px;background:#d6c4a2"></div>
    <div class="a" style="left:25px;top:15px;width:88px;height:7px;background:#cdb890"></div>
    <div class="a" style="left:34px;top:10px;width:30px;height:6px;background:#6a5a48"></div>
    <div class="a" style="left:68px;top:1px;width:44px;height:17px;background:linear-gradient(90deg,#eee 0 18%,#e9c0d8 18% 30%,#222 30% 46%,#f2f2f2 46%)"></div>
    <div class="a" style="left:26px;top:28px;width:42px;height:36px;background:linear-gradient(#333 0 14%,#d8d8d8 14% 24%,#1e1e1e 24% 40%,#e8e8e8 40% 48%,#2a2a2a 48% 58%,#ddd0b8 58% 80%,#c8b898 80%)"></div>
    <div class="a" style="left:20px;top:63px;width:56px;height:25px;background:linear-gradient(90deg,#7a8da8 0 8%,#c04545 8% 18%,#4d9cb8 18% 28%,#eee 28% 42%,#a0c0a0 42% 52%,#e8e8e8 52% 64%,#4a6fa0 64% 80%,#ccc 80%)"></div>
    <div class="a" style="left:70px;top:50px;width:10px;height:38px;background:#ccbd9f"></div>
    <div class="a" style="left:114px;top:0;width:60px;height:92px;background:#e8dbc2"></div>
    <div class="a" style="left:118px;top:14px;width:48px;height:76px;background:linear-gradient(90deg,#c9b89a 0 8%,#e8e8e8 8% 18%,#b04848 18% 24%,#eee 24% 36%,#2f3a50 36% 52%,#ddd 52% 62%,#3a4870 62% 76%,#6a84b0 76% 86%,#bbb 86%)"></div>
    <div class="a" style="left:142px;top:6px;width:24px;height:12px;background:linear-gradient(90deg,#3a4a80,#d04070 50%,#eee)"></div>
    <div class="a" style="left:174px;top:0;width:50px;height:92px;background:#ebe0cc"></div>
    <div class="a" style="left:176px;top:48px;width:48px;height:45px;background:linear-gradient(100deg,#3c4a80 0 16%,#e8e8f0 16% 24%,#2a3060 24% 44%,#b03848 44% 54%,#eee 54% 64%,#2a3a70 64% 78%,#2f8a80 78%)"></div>
    <div class="a" style="left:0;top:85px;width:224px;height:41px;background:repeating-linear-gradient(90deg,#f2f2f2 0 8px,#8a8a90 8px 9.5px)"></div>
    <div class="a" style="left:0;top:85px;width:224px;height:41px;background:repeating-linear-gradient(0deg,transparent 0 7px,rgba(80,80,90,0.55) 7px 8.5px)"></div>
    <div class="a" style="left:13px;top:84px;width:162px;height:52px;background:#2f7a3b;border-radius:55px 60px 0 0"></div>
    <div class="a" style="left:74px;top:70px;width:52px;height:26px;background:#2b7036;border-radius:10px 10px 26px 26px"></div>
    <div class="a" style="left:80px;top:28px;width:41px;height:58px;background:#c09478;border-radius:44% 44% 50% 50%"></div>
    <div class="a" style="left:78px;top:25px;width:44px;height:15px;background:#7a6a5e;border-radius:50% 50% 12% 12%"></div>
    <div class="a" style="left:86px;top:68px;width:28px;height:19px;background:#d6d0ca;border-radius:20% 20% 50% 50%"></div>
    <div class="a" style="left:93px;top:69px;width:14px;height:4px;background:#8a6a5a;border-radius:2px"></div>
    <div class="a" style="left:81px;top:50px;width:19px;height:12px;border:2.5px solid #4a3028;border-radius:3px"></div>
    <div class="a" style="left:101px;top:50px;width:19px;height:12px;border:2.5px solid #4a3028;border-radius:3px"></div>
   </div>
  </div>
  <!-- tile 4 woman -->
  <div class="a" style="left:48px;top:378px;width:126px;height:125.5px;background:#9d9089;overflow:hidden">
   <div class="a" style="left:0;top:0;width:126px;height:126px;filter:blur(1px)">
    <div class="a" style="left:6px;top:0;width:118px;height:92px;background:#2b1b15;border-radius:50% 50% 40% 40%"></div>
    <div class="a" style="left:27px;top:36px;width:82px;height:100px;background:#b98754;border-radius:42% 42% 40% 40%"></div>
    <div class="a" style="left:36px;top:100px;width:64px;height:30px;background:#ae7a4c;border-radius:30%"></div>
    <div class="a" style="left:22px;top:24px;width:92px;height:26px;background:#2b1b15;border-radius:50% 50% 45% 45%"></div>
    <div class="a" style="left:16px;top:40px;width:16px;height:52px;background:#2b1b15;border-radius:50%"></div>
    <div class="a" style="left:106px;top:40px;width:14px;height:45px;background:#2b1b15;border-radius:50%"></div>
    <div class="a" style="left:36px;top:60px;width:22px;height:6px;background:#6e4426;border-radius:50%"></div>
    <div class="a" style="left:72px;top:56px;width:22px;height:6px;background:#6e4426;border-radius:50%"></div>
    <div class="a" style="left:40px;top:68px;width:16px;height:8px;background:#8a6a50;border-radius:50%"></div>
    <div class="a" style="left:76px;top:64px;width:16px;height:8px;background:#8a6a50;border-radius:50%"></div>
    <div class="a" style="left:44px;top:70px;width:8px;height:4px;background:#3a2418;border-radius:50%"></div>
    <div class="a" style="left:80px;top:66px;width:8px;height:4px;background:#3a2418;border-radius:50%"></div>
    <div class="a" style="left:58px;top:74px;width:14px;height:20px;background:#c49262;border-radius:40%"></div>
    <div class="a" style="left:54px;top:104px;width:28px;height:3px;background:#8a4a30;border-radius:2px"></div>
    <div class="a" style="left:28px;top:102px;width:5px;height:6px;background:#e0c8a8;border-radius:50%"></div>
   </div>
  </div>
  <!-- tile 5 avatar -->
  <div class="a" style="left:48px;top:503.5px;width:126px;height:126.5px;background:#fff;overflow:hidden">
    <div class="a" style="left:38px;top:33px;width:50px;height:50px;border-radius:50%;background:#d3d3ce"></div>
    <div class="a" style="left:3px;top:87px;width:120px;height:80px;border-radius:50% 50% 0 0 / 38% 38% 0 0;background:#d3d3ce"></div>
  </div>
  <!-- tile 6 logo -->
  <div class="a" style="left:48px;top:630px;width:126px;height:125px;background:#000;overflow:hidden">
    <svg style="left:0;top:0;filter:blur(0.4px)" width="126" height="125" viewBox="0 0 126 125">
      <g transform="translate(63,62)">
        <defs><path id="lgt" d="M-46.4 18.7 A50 50 0 1 1 46.4 18.7"/><path id="lgb" d="M-48 37.5 A60 60 0 0 0 48 37.5"/></defs>
        <text font-family="Liberation Serif" font-size="12" fill="#26347c" stroke="#26347c" stroke-width="0.3"><textPath href="#lgt" textLength="196" lengthAdjust="spacing">ALANYA ALAADDİN KEYKUBAT</textPath></text>
        <text font-family="Liberation Serif" font-size="12" fill="#26347c" stroke="#26347c" stroke-width="0.3"><textPath href="#lgb" textLength="104" lengthAdjust="spacing">ÜNİVERSİTESİ</textPath></text>
        <rect x="-31" y="-31" width="62" height="62" fill="none" stroke="#1f47a0" stroke-width="4.5"/>
        <rect x="-31" y="-31" width="62" height="62" fill="none" stroke="#1f47a0" stroke-width="4.5" transform="rotate(45)"/>
        <circle r="30.5" fill="#000" stroke="#c9a35e" stroke-width="1.3"/>
        <path d="M-9 -14 a9 7 0 0 1 18 0 z" fill="#d7a94d"/>
        <g stroke="#d7c090" stroke-width="1"><path d="M-13 -19 l2 3 M-8 -22 l1 3 M-3 -23 v3 M3 -23 v3 M8 -22 l-1 3 M13 -19 l-2 3"/></g>
        <g fill="#27a3e0">
          <path d="M-43 -14 h31 l-1 4 h-28 z"/>
          <path d="M-40 -8 h28 l-1 4 h-24 z"/>
          <path d="M-36 -2 h24 l-1 4 h-20 z"/>
          <path d="M-31 4 h19 l-1 4 h-15 z"/>
          <path d="M-25 10 h13 l-1 4 h-9 z"/>
          <path d="M43 -14 h-31 l1 4 h28 z"/>
          <path d="M40 -8 h-28 l1 4 h24 z"/>
          <path d="M36 -2 h-24 l1 4 h20 z"/>
          <path d="M31 4 h-19 l1 4 h15 z"/>
          <path d="M25 10 h-13 l1 4 h9 z"/>
          <path d="M-12 -14 q12 -5 24 0 l-3 22 l-9 6 l-9 -6 z"/>
          <ellipse cx="0" cy="24" rx="3.5" ry="8"/>
          <ellipse cx="-9" cy="17" rx="3" ry="6.5" transform="rotate(28 -9 17)"/>
          <ellipse cx="9" cy="17" rx="3" ry="6.5" transform="rotate(-28 9 17)"/>
        </g>
        <ellipse cx="-7" cy="-6" rx="3.2" ry="2.6" fill="#0a0a0a"/><ellipse cx="7" cy="-6" rx="3.2" ry="2.6" fill="#0a0a0a"/>
      </g>
    </svg>
  </div>
</div>
<!-- window controls -->
<svg style="left:0;top:0" width="1920" height="40">
  <path d="M1800 16.5 h10" stroke="#fff" stroke-width="1.2"/>
  <rect x="1846" y="13" width="8" height="8" fill="none" stroke="#fff" stroke-width="1.1"/>
  <path d="M1848 13 v-2 h8 v8 h-2" fill="none" stroke="#fff" stroke-width="1.1"/>
  <path d="M1892 11 l10 10 M1902 11 l-10 10" stroke="#fff" stroke-width="1.2"/>
</svg>
</body></html>
